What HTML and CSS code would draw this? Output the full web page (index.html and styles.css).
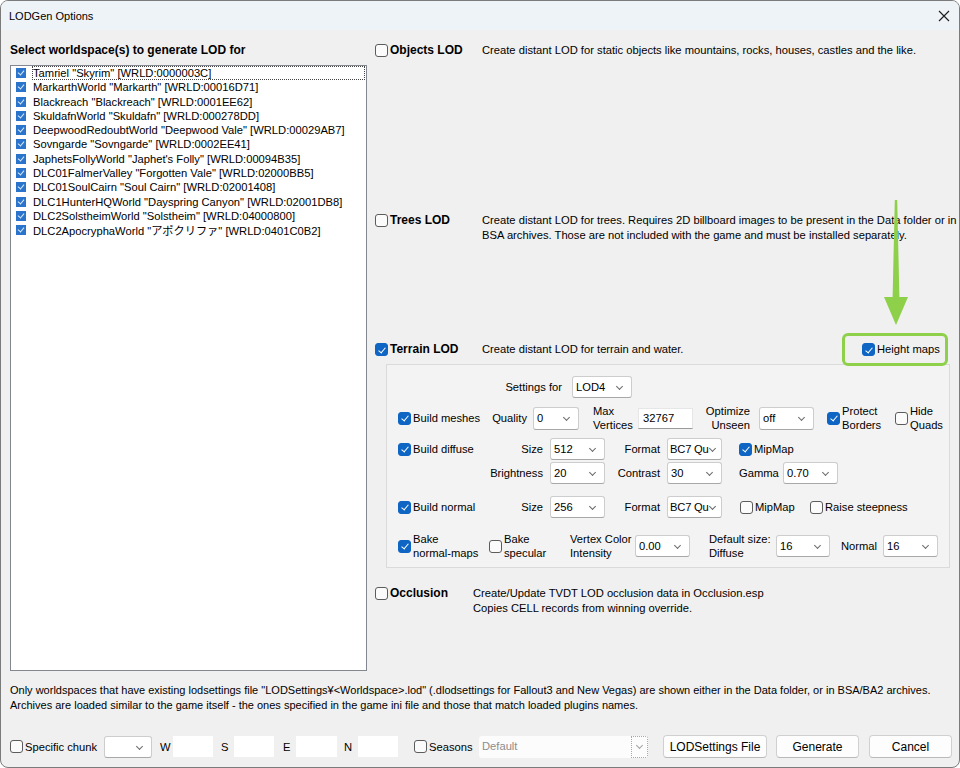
FILE: index.html
```html
<!DOCTYPE html>
<html lang="en">
<head>
    <meta charset="UTF-8">
    <title>LODGen Options</title>
    <link rel="stylesheet" href="styles.css">
</head>
<body>
<div class="window">
    <div class="titlebar">
        <span class="title">LODGen Options</span>
        <svg class="close" width="12" height="12" viewBox="0 0 12 12"><path d="M1 1L11 11M11 1L1 11" stroke="#1b1b1b" stroke-width="1.1"/></svg>
    </div>

    <div class="dialog">
        <div class="main">
            <div class="left">
                <h2 class="heading">Select worldspace(s) to generate LOD for</h2>
                <ul class="worlds">
                    <li class="focus"><span class="tick"></span><span class="name">Tamriel "Skyrim" [WRLD:0000003C]</span></li>
                    <li><span class="tick"></span><span class="name">MarkarthWorld "Markarth" [WRLD:00016D71]</span></li>
                    <li><span class="tick"></span><span class="name">Blackreach "Blackreach" [WRLD:0001EE62]</span></li>
                    <li><span class="tick"></span><span class="name">SkuldafnWorld "Skuldafn" [WRLD:000278DD]</span></li>
                    <li><span class="tick"></span><span class="name">DeepwoodRedoubtWorld "Deepwood Vale" [WRLD:00029AB7]</span></li>
                    <li><span class="tick"></span><span class="name">Sovngarde "Sovngarde" [WRLD:0002EE41]</span></li>
                    <li><span class="tick"></span><span class="name">JaphetsFollyWorld "Japhet's Folly" [WRLD:00094B35]</span></li>
                    <li><span class="tick"></span><span class="name">DLC01FalmerValley "Forgotten Vale" [WRLD:02000BB5]</span></li>
                    <li><span class="tick"></span><span class="name">DLC01SoulCairn "Soul Cairn" [WRLD:02001408]</span></li>
                    <li><span class="tick"></span><span class="name">DLC1HunterHQWorld "Dayspring Canyon" [WRLD:02001DB8]</span></li>
                    <li><span class="tick"></span><span class="name">DLC2SolstheimWorld "Solstheim" [WRLD:04000800]</span></li>
                    <li><span class="tick"></span><span class="name">DLC2ApocryphaWorld "アポクリファ" [WRLD:0401C0B2]</span></li>
                </ul>
            </div>

            <div class="options">
                <div class="lod objects">
                    <div class="lod-name"><span class="cb"></span>Objects LOD</div>
                    <p class="desc">Create distant LOD for static objects like mountains, rocks, houses, castles and the like.</p>
                </div>

                <div class="lod trees">
                    <div class="lod-name"><span class="cb"></span>Trees LOD</div>
                    <p class="desc">Create distant LOD for trees. Requires 2D billboard images to be present in the Data folder or in<br>BSA archives. Those are not included with the game and must be installed separately.</p>
                </div>

                <div class="lod terrain">
                    <div class="lod-name"><span class="cb on"></span>Terrain LOD</div>
                    <p class="desc">Create distant LOD for terrain and water.</p>
                    <div class="check hm">
                        <span class="cb on"></span>Height maps
                        <span class="frame"></span>
                    </div>
                </div>

                <div class="panel">
                    <div class="row r0">
                        <span class="lbl ra">Settings for</span>
                        <div class="select">LOD4</div>
                    </div>
                    <div class="row r1">
                        <div class="check"><span class="cb on"></span>Build meshes</div>
                        <span class="lbl ra">Quality</span>
                        <div class="select">0</div>
                        <span class="lbl two maxv">Max<br>Vertices</span>
                        <div class="input">32767</div>
                        <span class="lbl two ra">Optimize<br>Unseen</span>
                        <div class="select">off</div>
                        <div class="check two protect"><span class="cb on"></span>Protect<br>Borders</div>
                        <div class="check two"><span class="cb"></span>Hide<br>Quads</div>
                    </div>
                    <div class="row r2">
                        <div class="check"><span class="cb on"></span>Build diffuse</div>
                        <span class="lbl ra">Size</span>
                        <div class="select">512</div>
                        <span class="lbl ra">Format</span>
                        <div class="select fmt">BC7 Qu</div>
                        <div class="check mip"><span class="cb on"></span>MipMap</div>
                    </div>
                    <div class="row r3">
                        <span></span>
                        <span class="lbl ra">Brightness</span>
                        <div class="select">20</div>
                        <span class="lbl ra">Contrast</span>
                        <div class="select">30</div>
                        <span class="lbl gamma">Gamma</span>
                        <div class="select">0.70</div>
                    </div>
                    <div class="row r4">
                        <div class="check"><span class="cb on"></span>Build normal</div>
                        <span class="lbl ra">Size</span>
                        <div class="select">256</div>
                        <span class="lbl ra">Format</span>
                        <div class="select fmt">BC7 Qu</div>
                        <div class="check mip2"><span class="cb"></span>MipMap</div>
                        <div class="check"><span class="cb"></span>Raise steepness</div>
                    </div>
                    <div class="row r5">
                        <div class="check two"><span class="cb on"></span>Bake<br>normal-maps</div>
                        <div class="check two"><span class="cb"></span>Bake<br>specular</div>
                        <span class="lbl two">Vertex Color<br>Intensity</span>
                        <div class="select">0.00</div>
                        <span class="lbl two defsize">Default size:<br>Diffuse</span>
                        <div class="select">16</div>
                        <span class="lbl ra">Normal</span>
                        <div class="select">16</div>
                    </div>
                </div>

                <div class="lod occlusion">
                    <div class="lod-name"><span class="cb"></span>Occlusion</div>
                    <p class="desc">Create/Update TVDT LOD occlusion data in Occlusion.esp<br>Copies CELL records from winning override.</p>
                </div>

                <!-- annotation arrow pointing at Height maps -->
                <svg class="arrow" width="26" height="126" viewBox="0 0 26 126">
                    <polygon points="11.8,0 14.2,0 16.4,97 25,97 13,125 1,97 9.6,97" fill="#8fd04a"/>
                </svg>
            </div>
        </div>

        <p class="note">Only worldspaces that have existing lodsettings file "LODSettings¥&lt;Worldspace&gt;.lod" (.dlodsettings for Fallout3 and New Vegas) are shown either in the Data folder, or in BSA/BA2 archives.<br>Archives are loaded similar to the game itself - the ones specified in the game ini file and those that match loaded plugins names.</p>

        <div class="bottombar">
            <div class="check chunk"><span class="cb"></span>Specific chunk</div>
            <div class="select sm"></div>
            <span class="axis w">W</span><div class="input coord"></div>
            <span class="axis s">S</span><div class="input coord"></div>
            <span class="axis e">E</span><div class="input coord wide"></div>
            <span class="axis n">N</span><div class="input coord"></div>
            <div class="check seasons"><span class="cb"></span>Seasons</div>
            <div class="select off">Default<span class="dropbtn"></span></div>
            <button class="btn settings">LODSettings File</button>
            <button class="btn generate">Generate</button>
            <button class="btn cancel">Cancel</button>
        </div>
    </div>
</div>
</body>
</html>
```

FILE: styles.css
```css
* {
    box-sizing: border-box;
    margin: 0;
    padding: 0;
}
body {
    width: 960px;
    height: 768px;
    overflow: hidden;
    background: #fff;
    font-family: "Liberation Sans", Arial, "Noto Sans CJK JP", sans-serif;
    font-size: 11.2px;
    color: #000;
}
.window {
    height: 768px;
    border: 1px solid #7b7b7b;
    border-radius: 8px;
    overflow: hidden;
    background: #f0f0f0;
    display: flex;
    flex-direction: column;
}
.titlebar {
    height: 29px;
    flex: none;
    background: #eef3f8;
    display: flex;
    align-items: center;
    justify-content: space-between;
    padding: 0 9px 0 8px;
}
.title { font-size: 11px; }

.dialog {
    flex: 1;
    display: flex;
    flex-direction: column;
    padding: 0 4px 0 9px;
}
.main { display: flex; }

/* worldspace list */
.left {
    width: 357px;
    padding-top: 12px;
}
.heading {
    font-size: 12px;
    font-weight: bold;
    line-height: 16px;
    height: 16px;
}
.worlds {
    list-style: none;
    margin-top: 7px;
    height: 606px;
    background: #fff;
    border: 1px solid #828790;
    padding: 0 1px 0 5px;
}
.worlds li {
    display: flex;
    align-items: center;
    height: 14.27px;
}
.tick {
    width: 10px;
    height: 10px;
    margin-right: 6px;
    background: #2a74cc;
    position: relative;
}
.tick::after {
    content: "";
    position: absolute;
    left: 3px;
    top: 1px;
    width: 3px;
    height: 5px;
    border: solid #dce9f8;
    border-width: 0 1px 1px 0;
    transform: rotate(40deg);
}
.name {
    flex: 1;
    align-self: stretch;
    display: flex;
    align-items: center;
    padding-left: 1px;
    white-space: nowrap;
}
.focus .name { outline: 1px dotted #444; outline-offset: -1px; }

/* checkboxes */
.cb {
    flex: none;
    width: 13px;
    height: 13px;
    border: 1px solid #5c5c5c;
    border-radius: 3px;
    background: #fbfbfb;
    position: relative;
}
.cb.on {
    background: #0f65c3;
    border-color: #0f65c3;
}
.cb.on::after {
    content: "";
    position: absolute;
    left: 3.5px;
    top: 1.5px;
    width: 3px;
    height: 6px;
    border: solid #fff;
    border-width: 0 1.2px 1.2px 0;
    transform: rotate(40deg);
}
.check {
    display: flex;
    align-items: center;
    gap: 2px;
    white-space: nowrap;
}
.check.two { line-height: 14px; }

/* right column */
.options {
    position: relative;
    width: 583px;
    margin-left: 5px;
    padding-top: 13px;
}
.lod {
    display: flex;
    line-height: 15px;
}
.lod-name {
    flex: none;
    width: 110px;
    height: 15px;
    display: flex;
    align-items: center;
    gap: 2px;
    padding-left: 3px;
    font-weight: bold;
    font-size: 12px;
}
.desc { white-space: nowrap; }
.trees { margin-top: 155px; }
.terrain { margin-top: 99px; }
.occlusion { margin-top: 18px; }
.occlusion .lod-name { width: 101px; }

.hm {
    position: relative;
    margin-left: auto;
    width: 93px;
    height: 15px;
}
.frame {
    position: absolute;
    left: -20px;
    top: -9px;
    width: 106px;
    height: 33px;
    border: 3px solid #8fd04a;
    border-radius: 6px;
}
.arrow {
    position: absolute;
    left: 511px;
    top: 170px;
    z-index: 2;
}

/* terrain settings */
.panel {
    margin: 7px 0 0 14px;
    width: 564px;
    height: 204px;
    border: 1px solid #dadada;
    background: #f3f3f3;
    padding: 11px 0 0 11px;
}
.row {
    display: grid;
    align-items: center;
}
.r0 { height: 22px; grid-template-columns: 174px 60px; }
.r1 { margin-top: 6px; height: 28px; grid-template-columns: 87px 48px 46px 59px 55px 66px 55px 81px auto; }
.r2 { margin-top: 5px; height: 24px; grid-template-columns: 87px 65px 55px 62px 55px auto; }
.r3 { height: 24px; grid-template-columns: 87px 65px 55px 62px 55px 61px 55px; }
.r4 { margin-top: 10px; height: 24px; grid-template-columns: 87px 65px 55px 62px 55px 88px auto; }
.r5 { margin-top: 13px; height: 28px; grid-template-columns: 91px 81px 65px 55px 86px 54px 53px 55px; }

.lbl { white-space: nowrap; }
.lbl.two { line-height: 14px; }
.lbl.ra { text-align: right; padding-right: 7px; }
.r0 .lbl.ra { padding-right: 10px; }
.r1 .lbl.ra { padding-right: 6px; }
.r1 .lbl.two.ra { padding-right: 9px; }
.r5 .lbl.ra { padding-right: 6px; }
.maxv { padding-left: 14px; }
.protect { padding-left: 13px; }
.mip { padding-left: 17px; }
.mip2 { padding-left: 18px; }
.gamma { padding-left: 17px; }
.defsize { padding-left: 19px; }

.select {
    position: relative;
    height: 22px;
    background: #fff;
    border: 1px solid #cdcdcd;
    border-bottom-color: #a8a8a8;
    border-radius: 3px;
    padding: 0 16px 0 3px;
    line-height: 20px;
    white-space: nowrap;
    overflow: hidden;
}
.r1 .select { height: 23px; line-height: 21px; }
.select::after {
    content: "";
    position: absolute;
    right: 9px;
    top: 7px;
    width: 4px;
    height: 4px;
    border: solid #6a6a6a;
    border-width: 0 1px 1px 0;
    transform: rotate(45deg);
}
.select.fmt { padding-left: 2px; letter-spacing: -0.2px; }
.select.fmt::after { right: 6px; }
.input {
    height: 21px;
    background: #fff;
    border: 1px solid #e6e6e6;
    border-bottom-color: #9a9a9a;
    padding: 0 4px;
    line-height: 19px;
}

/* bottom */
.note {
    margin-top: 12px;
    line-height: 15px;
    white-space: nowrap;
    font-size: 11px;
}
.bottombar {
    margin-top: 22px;
    height: 23px;
    display: flex;
    align-items: center;
}
.chunk { width: 94px; }
.select.sm { width: 48px; }
.axis { width: 21px; padding-left: 8px; }
.axis.e { width: 22px; padding-left: 9px; }
.axis.n { padding-left: 7px; }
.input.coord { width: 40px; border: none; }
.input.coord.wide { width: 41px; }
.seasons { width: 81px; padding-left: 16px; }
.select.off {
    width: 169px;
    color: #8d8d8d;
    border: none;
    background: #fcfcfc;
}
.select.off::after { right: 6px; border-color: #a0a0a0; }
.dropbtn {
    position: absolute;
    right: 0;
    top: 0;
    width: 17px;
    height: 22px;
    border: 1px dotted #a8a8a8;
}
.btn {
    height: 23px;
    font: inherit;
    font-size: 12px;
    background: #fdfdfd;
    border: 1px solid #d0d0d0;
    border-bottom-color: #b9b9b9;
    border-radius: 4px;
}
.settings { width: 104px; margin-left: 15px; }
.generate { width: 83px; margin-left: 9px; }
.cancel { width: 83px; margin-left: 10px; }
```
